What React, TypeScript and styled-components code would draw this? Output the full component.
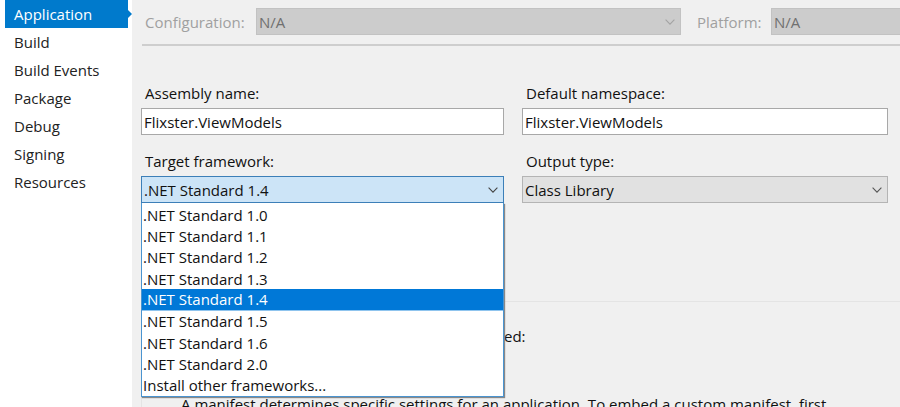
import React, { useState } from "react";
import styled, { createGlobalStyle, css } from "styled-components";

const GlobalStyle = createGlobalStyle`
  *, *::before, *::after { box-sizing: border-box; }
  html, body { margin: 0; overflow: hidden; }
  body, button, input, select {
    font-family: "Open Sans", "Noto Sans", sans-serif;
    font-size: 15px;
    line-height: 20px;
    color: #111;
  }
`;

const Page = styled.div`
  display: flex;
  height: 100vh;
  overflow: hidden;
  background: #f0f0f0;
`;

const Sidebar = styled.nav`
  flex: 0 0 132px;
  padding: 0 4px 0 5px;
  background: #fff;
`;

const NavItem = styled.a<{ $active?: boolean }>`
  display: flex;
  align-items: center;
  position: relative;
  height: 28px;
  padding: 0 9px;
  color: #222;
  text-decoration: none;
  ${({ $active }) =>
    $active &&
    css`
      background: #007acc;
      color: #fff;
      &::after {
        content: "";
        position: absolute;
        left: 100%;
        top: 10px;
        border: 4px solid transparent;
        border-left-color: #007acc;
        border-right-width: 0;
      }
    `}
`;

const Main = styled.main`
  flex: 1;
  min-width: 0;
  padding-left: 9px;
`;

const Toolbar = styled.div`
  display: flex;
  align-items: center;
  margin-right: -296px;
  padding: 8px 0 9px 4px;
`;

const ToolbarLabel = styled.label<{ $width: number; $indent?: number }>`
  flex: 0 0 ${({ $width }) => $width}px;
  padding-left: ${({ $indent = 0 }) => $indent}px;
  color: #a0a0a0;
`;

const Divider = styled.hr`
  height: 2px;
  margin: 0 0 0 1px;
  border: 0;
  background: #cecece;
`;

const Fields = styled.div`
  display: grid;
  grid-template-columns: minmax(0, 363fr) minmax(0, 366fr);
  gap: 16px 18px;
  margin: 37px 12px 0 0;
`;

const Field = styled.div`
  position: relative;
`;

const FieldLabel = styled.label`
  display: block;
  height: 25px;
  padding-left: 4px;
`;

const TextBox = styled.input`
  display: block;
  width: 100%;
  height: 27px;
  padding: 0 2px;
  border: 1px solid #a8a8a8;
  border-radius: 0;
  background: #fff;
  outline: none;
`;

type Tone = "normal" | "open" | "disabled";

const tones = {
  normal: { bg: "#e1e1e1", border: "#b4b4b4", text: "#111", arrow: "#555" },
  open: { bg: "#cce4f7", border: "#3c7fb8", text: "#111", arrow: "#444" },
  disabled: { bg: "#cccccc", border: "#c2c2c2", text: "#707070", arrow: "#a3a3a3" },
};

const SelectShell = styled.div`
  position: relative;
  flex: 1;
`;

const SelectBox = styled.select<{ $tone: Tone }>`
  appearance: none;
  display: block;
  width: 100%;
  height: 27px;
  padding: 1px 24px 0 2px;
  border: 1px solid ${({ $tone }) => tones[$tone].border};
  border-radius: 0;
  background: ${({ $tone }) => tones[$tone].bg};
  color: ${({ $tone }) => tones[$tone].text};
  opacity: 1;
  outline: none;
`;

const Arrow = styled.svg<{ $tone: Tone }>`
  position: absolute;
  right: 6px;
  top: 11px;
  width: 10px;
  height: 6px;
  fill: none;
  stroke: ${({ $tone }) => tones[$tone].arrow};
  stroke-width: 1.1;
  pointer-events: none;
`;

const List = styled.ul`
  position: absolute;
  z-index: 1;
  left: 0;
  right: 0;
  top: 100%;
  display: grid;
  grid-auto-rows: 1fr;
  height: 194px;
  margin: 0;
  padding: 1px 0 0;
  list-style: none;
  border: 1px solid #4a94d0;
  border-top: 0;
  background: #fff;
  box-shadow: 1px 1px 1px #888;
`;

const ListItem = styled.li<{ $selected: boolean }>`
  display: flex;
  align-items: center;
  padding: 0 1px;
  line-height: 18px;
  white-space: nowrap;
  cursor: default;
  ${({ $selected }) =>
    $selected &&
    css`
      background: #0078d7;
      border-bottom: 1px solid #8fc4ee;
      color: #fff;
    `}
`;

const ResourceGroup = styled.section`
  margin-top: 98px;
  padding: 24px 0 0 25px;
  border: solid #e4e4e4;
  border-width: 1px 0 0 1px;
  white-space: nowrap;
`;

const GroupText = styled.p`
  margin: 0;
`;

const ManifestNote = styled.p`
  margin: 48px 0 0 14px;
`;

const navItems = ["Application", "Build", "Build Events", "Package", "Debug", "Signing", "Resources"];

const frameworks = [
  ".NET Standard 1.0",
  ".NET Standard 1.1",
  ".NET Standard 1.2",
  ".NET Standard 1.3",
  ".NET Standard 1.4",
  ".NET Standard 1.5",
  ".NET Standard 1.6",
  ".NET Standard 2.0",
  "Install other frameworks...",
];

interface SelectProps extends React.SelectHTMLAttributes<HTMLSelectElement> {
  tone?: Tone;
  options: string[];
}

function Select({ tone = "normal", options, ...rest }: SelectProps) {
  return (
    <SelectShell>
      <SelectBox $tone={tone} disabled={tone === "disabled"} {...rest}>
        {options.map((option) => (
          <option key={option}>{option}</option>
        ))}
      </SelectBox>
      <Arrow $tone={tone} viewBox="0 0 10 6" aria-hidden="true">
        <path d="M0.6 0.7 L5 5.1 L9.4 0.7" />
      </Arrow>
    </SelectShell>
  );
}

export default function App() {
  const [open, setOpen] = useState(true);
  const [framework, setFramework] = useState(".NET Standard 1.4");

  return (
    <Page>
      <GlobalStyle />
      <Sidebar>
        {navItems.map((item, index) => (
          <NavItem key={item} href="#" $active={index === 0}>
            {item}
          </NavItem>
        ))}
      </Sidebar>
      <Main>
        <Toolbar>
          <ToolbarLabel $width={111} htmlFor="configuration">
            Configuration:
          </ToolbarLabel>
          <Select id="configuration" tone="disabled" options={["N/A"]} />
          <ToolbarLabel $width={90} $indent={16} htmlFor="platform">
            Platform:
          </ToolbarLabel>
          <Select id="platform" tone="disabled" options={["N/A"]} />
        </Toolbar>
        <Divider />
        <Fields>
          <Field>
            <FieldLabel htmlFor="assembly">Assembly name:</FieldLabel>
            <TextBox id="assembly" defaultValue="Flixster.ViewModels" />
          </Field>
          <Field>
            <FieldLabel htmlFor="namespace">Default namespace:</FieldLabel>
            <TextBox id="namespace" defaultValue="Flixster.ViewModels" />
          </Field>
          <Field>
            <FieldLabel htmlFor="framework">Target framework:</FieldLabel>
            <Select
              id="framework"
              tone={open ? "open" : "normal"}
              options={frameworks}
              value={framework}
              onChange={(event) => setFramework(event.target.value)}
              onMouseDown={(event) => {
                event.preventDefault();
                setOpen(!open);
              }}
            />
            {open && (
              <List role="listbox" aria-label="Target framework">
                {frameworks.map((name) => (
                  <ListItem
                    key={name}
                    role="option"
                    aria-selected={name === framework}
                    $selected={name === framework}
                    onClick={() => {
                      setFramework(name);
                      setOpen(false);
                    }}
                  >
                    {name}
                  </ListItem>
                ))}
              </List>
            )}
          </Field>
          <Field>
            <FieldLabel htmlFor="output">Output type:</FieldLabel>
            <Select id="output" options={["Class Library"]} />
          </Field>
        </Fields>
        <ResourceGroup>
          <GroupText>Specify how application resources will be managed:</GroupText>
          <ManifestNote>
            A manifest determines specific settings for an application. To embed a custom manifest, first
          </ManifestNote>
        </ResourceGroup>
      </Main>
    </Page>
  );
}
